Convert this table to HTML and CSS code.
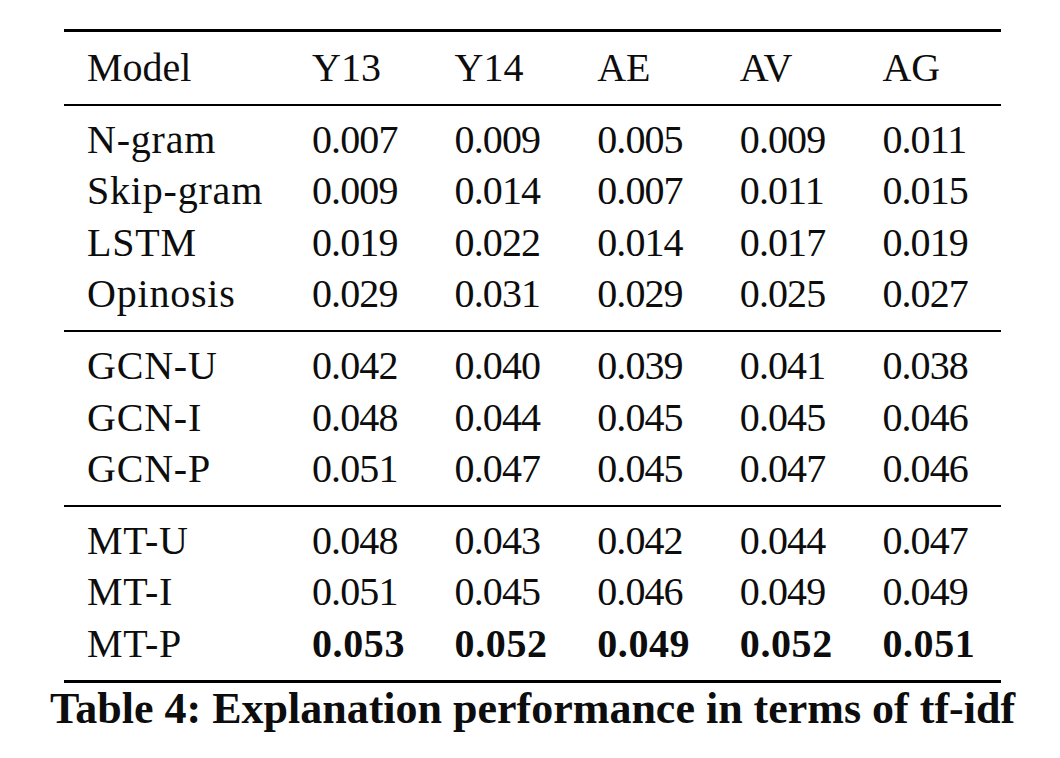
FILE: index.html
```html
<!DOCTYPE html>
<html lang="en">
<head>
<meta charset="utf-8">
<title>Table 4</title>
<link rel="stylesheet" href="styles.css">
</head>
<body>
<div class="figure">
  <div class="tbl">
    <div class="head">
      <div class="row"><span>Model</span><span>Y13</span><span>Y14</span><span>AE</span><span>AV</span><span>AG</span></div>
    </div>
    <div class="group">
      <div class="row"><span>N-gram</span><span>0.007</span><span>0.009</span><span>0.005</span><span>0.009</span><span>0.011</span></div>
      <div class="row"><span>Skip-gram</span><span>0.009</span><span>0.014</span><span>0.007</span><span>0.011</span><span>0.015</span></div>
      <div class="row"><span>LSTM</span><span>0.019</span><span>0.022</span><span>0.014</span><span>0.017</span><span>0.019</span></div>
      <div class="row"><span>Opinosis</span><span>0.029</span><span>0.031</span><span>0.029</span><span>0.025</span><span>0.027</span></div>
    </div>
    <div class="group">
      <div class="row"><span>GCN-U</span><span>0.042</span><span>0.040</span><span>0.039</span><span>0.041</span><span>0.038</span></div>
      <div class="row"><span>GCN-I</span><span>0.048</span><span>0.044</span><span>0.045</span><span>0.045</span><span>0.046</span></div>
      <div class="row"><span>GCN-P</span><span>0.051</span><span>0.047</span><span>0.045</span><span>0.047</span><span>0.046</span></div>
    </div>
    <div class="group last">
      <div class="row"><span>MT-U</span><span>0.048</span><span>0.043</span><span>0.042</span><span>0.044</span><span>0.047</span></div>
      <div class="row"><span>MT-I</span><span>0.051</span><span>0.045</span><span>0.046</span><span>0.049</span><span>0.049</span></div>
      <div class="row"><span>MT-P</span><b>0.053</b><b>0.052</b><b>0.049</b><b>0.052</b><b>0.051</b></div>
    </div>
  </div>
  <div class="caption"><span>Table 4: Explanation performance in terms of tf-idf</span></div>
</div>
</body>
</html>
```

FILE: styles.css
```css
html, body {
  margin: 0;
  padding: 0;
  background: #fff;
}
body {
  font-family: "Liberation Serif", "Times New Roman", serif;
  color: #0d0d0d;
}
.figure {
  width: 937px;
  margin: 29px 0 0 64px;
}
.tbl {
  border-top: 3px solid #000;
  font-size: 40px;
}
.head {
  padding: 10px 0;
  border-bottom: 2px solid #000;
}
.group {
  padding: 8px 0 10px;
  border-bottom: 2px solid #000;
}
.group.last {
  border-bottom: 3px solid #000;
}
.row {
  display: grid;
  grid-template-columns: 224px repeat(5, 1fr);
  height: 51.6px;
  line-height: 51.6px;
}
.row > * {
  padding-left: 24px;
  white-space: nowrap;
  letter-spacing: -0.9px;
}
.row > :first-child {
  padding-left: 23px;
  letter-spacing: 0.8px;
}
.head .row > * {
  letter-spacing: 0;
}
.row b {
  font-weight: bold;
  letter-spacing: 0.6px;
}
.caption {
  display: flex;
  justify-content: center;
  font-size: 44px;
  font-weight: bold;
  line-height: 52px;
  white-space: nowrap;
}
```
